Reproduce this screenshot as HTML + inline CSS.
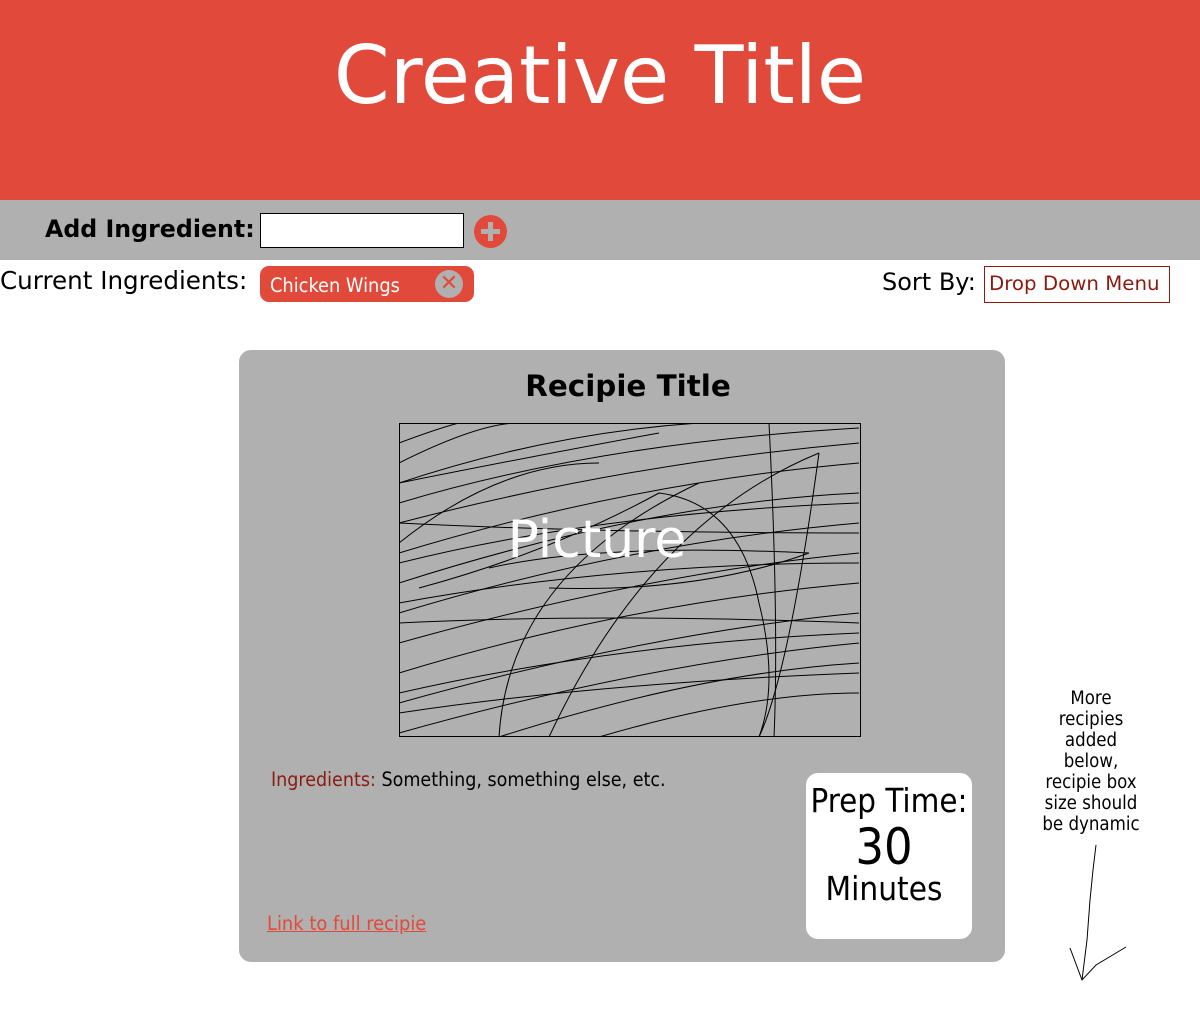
<!DOCTYPE html>
<html><head><meta charset="utf-8"><style>
*{margin:0;padding:0;box-sizing:border-box}
body{width:1200px;height:1024px;background:#fff;font-family:"DejaVu Sans","Liberation Sans",sans-serif;position:relative;overflow:hidden}
.a{position:absolute;white-space:nowrap}
.c{font-family:'DejaVu Sans Condensed','DejaVu Sans',sans-serif}
</style></head><body>
<div class="a" style="left:0;top:0;width:1200px;height:200px;background:#E14A3A"></div>
<div class="a" style="left:0;top:28px;width:1200px;text-align:center;color:#fff;font-size:80px;line-height:96px">Creative Title</div>
<div class="a" style="left:0;top:200px;width:1200px;height:60px;background:#B0B0B0"></div>
<div class="a" style="left:45px;top:214px;font-size:23.7px;font-weight:bold;line-height:30px">Add Ingredient:</div>
<div class="a" style="left:260px;top:213px;width:204px;height:35px;background:#fff;border:1px solid #000"></div>
<div class="a" style="left:474px;top:215px;width:33px;height:33px;border-radius:50%;background:#E14A3A"></div>
<div class="a" style="left:481px;top:229px;width:19px;height:5px;background:#B0B0B0"></div>
<div class="a" style="left:488px;top:222px;width:5px;height:19px;background:#B0B0B0"></div>
<div class="a" style="left:0;top:266px;font-size:24.6px;line-height:30px">Current Ingredients:</div>
<div class="a" style="left:260px;top:266px;width:214px;height:36px;border-radius:9px;background:#E14A3A"></div>
<div class="a c" style="left:270px;top:274px;color:#fff;font-size:19.8px;line-height:24px">Chicken Wings</div>
<div class="a" style="left:435px;top:270px;width:28px;height:28px;border-radius:50%;background:#B0B0B0;color:#E14A3A;font-size:22px;font-weight:bold;text-align:center;line-height:28px">✕</div>
<div class="a" style="left:882px;top:267px;font-size:24px;line-height:30px">Sort By:</div>
<div class="a" style="left:984px;top:266px;width:186px;height:37px;border:1px solid #8B1A10;color:#8B1A10;font-size:19.8px;line-height:34px;padding-left:4px">Drop Down Menu</div>
<div class="a" style="left:239px;top:350px;width:766px;height:612px;border-radius:12px;background:#B0B0B0"></div>
<div class="a" style="left:239px;top:369px;width:786px;text-align:center;font-size:29.4px;font-weight:bold;line-height:34px;padding-right:8px">Recipie Title</div>
<svg class="a" style="left:399px;top:423px" width="462" height="314" viewBox="0 0 462 314">
<rect x="0.5" y="0.5" width="461" height="313" fill="#B0B0B0" stroke="#000"/>
<g fill="none" stroke="#000" stroke-width="1">
<path d="M0 60 Q150 10 300 0"/><path d="M0 80 Q200 20 460 5"/><path d="M0 100 Q230 40 460 20"/>
<path d="M0 130 Q230 60 460 40"/><path d="M0 160 Q250 80 460 70"/><path d="M0 190 Q230 120 460 100"/>
<path d="M0 220 Q250 150 460 130"/><path d="M0 250 Q230 180 460 160"/><path d="M0 280 Q250 210 460 190"/>
<path d="M0 310 Q250 240 460 220"/><path d="M100 314 Q300 250 460 240"/><path d="M200 314 Q350 270 460 270"/>
<path d="M0 100 Q200 110 460 110"/><path d="M0 200 Q200 190 460 200"/><path d="M0 40 Q80 0 120 0"/>
<path d="M0 20 Q40 5 60 0"/><path d="M100 314 Q110 150 300 60"/><path d="M150 314 Q250 100 420 30"/>
<path d="M370 0 Q380 200 375 314"/><path d="M420 30 Q390 250 360 314"/><path d="M20 165 Q150 130 260 70 Q340 80 360 180 Q380 260 360 314"/>
<path d="M90 145 Q200 120 410 130 Q300 170 150 165"/><path d="M0 290 Q200 260 460 250"/><path d="M0 120 Q100 40 200 40"/>
<path d="M0 60 Q150 30 260 10"/><path d="M0 140 Q200 90 460 80"/><path d="M0 270 Q220 220 460 210"/><path d="M0 180 Q220 140 460 140"/>
</g>
<text x="198" y="134" text-anchor="middle" fill="#fff" font-family="DejaVu Sans,sans-serif" font-size="52">Picture</text>
</svg>
<div class="a c" style="left:271px;top:768px;font-size:19.5px;line-height:24px"><span style="color:#8B1A10">Ingredients:</span> Something, something else, etc.</div>
<div class="a c" style="left:267px;top:912px;font-size:19.9px;line-height:24px;color:#E14A3A;text-decoration:underline">Link to full recipie</div>
<div class="a c" style="left:806px;top:773px;width:166px;height:166px;border-radius:12px;background:#fff;text-align:center">
<div style="font-size:32.8px;line-height:36px;margin-top:10px">Prep Time:</div>
<div style="font-size:50px;line-height:56px;margin-left:-10px">30</div>
<div style="font-size:33px;line-height:36px;margin-left:-10px;margin-top:-4px">Minutes</div></div>
<div class="a c" style="left:1030px;top:688px;width:122px;text-align:center;font-size:18.5px;line-height:21px">More<br>recipies<br>added<br>below,<br>recipie box<br>size should<br>be dynamic</div>
<svg class="a" style="left:1060px;top:840px" width="80" height="150"><g fill="none" stroke="#000"><path d="M36 5 L33 30 L30 60 L27 100 L22 140"/><path d="M10 108 L22 140 L36 125 L66 107"/></g></svg>
</body></html>
